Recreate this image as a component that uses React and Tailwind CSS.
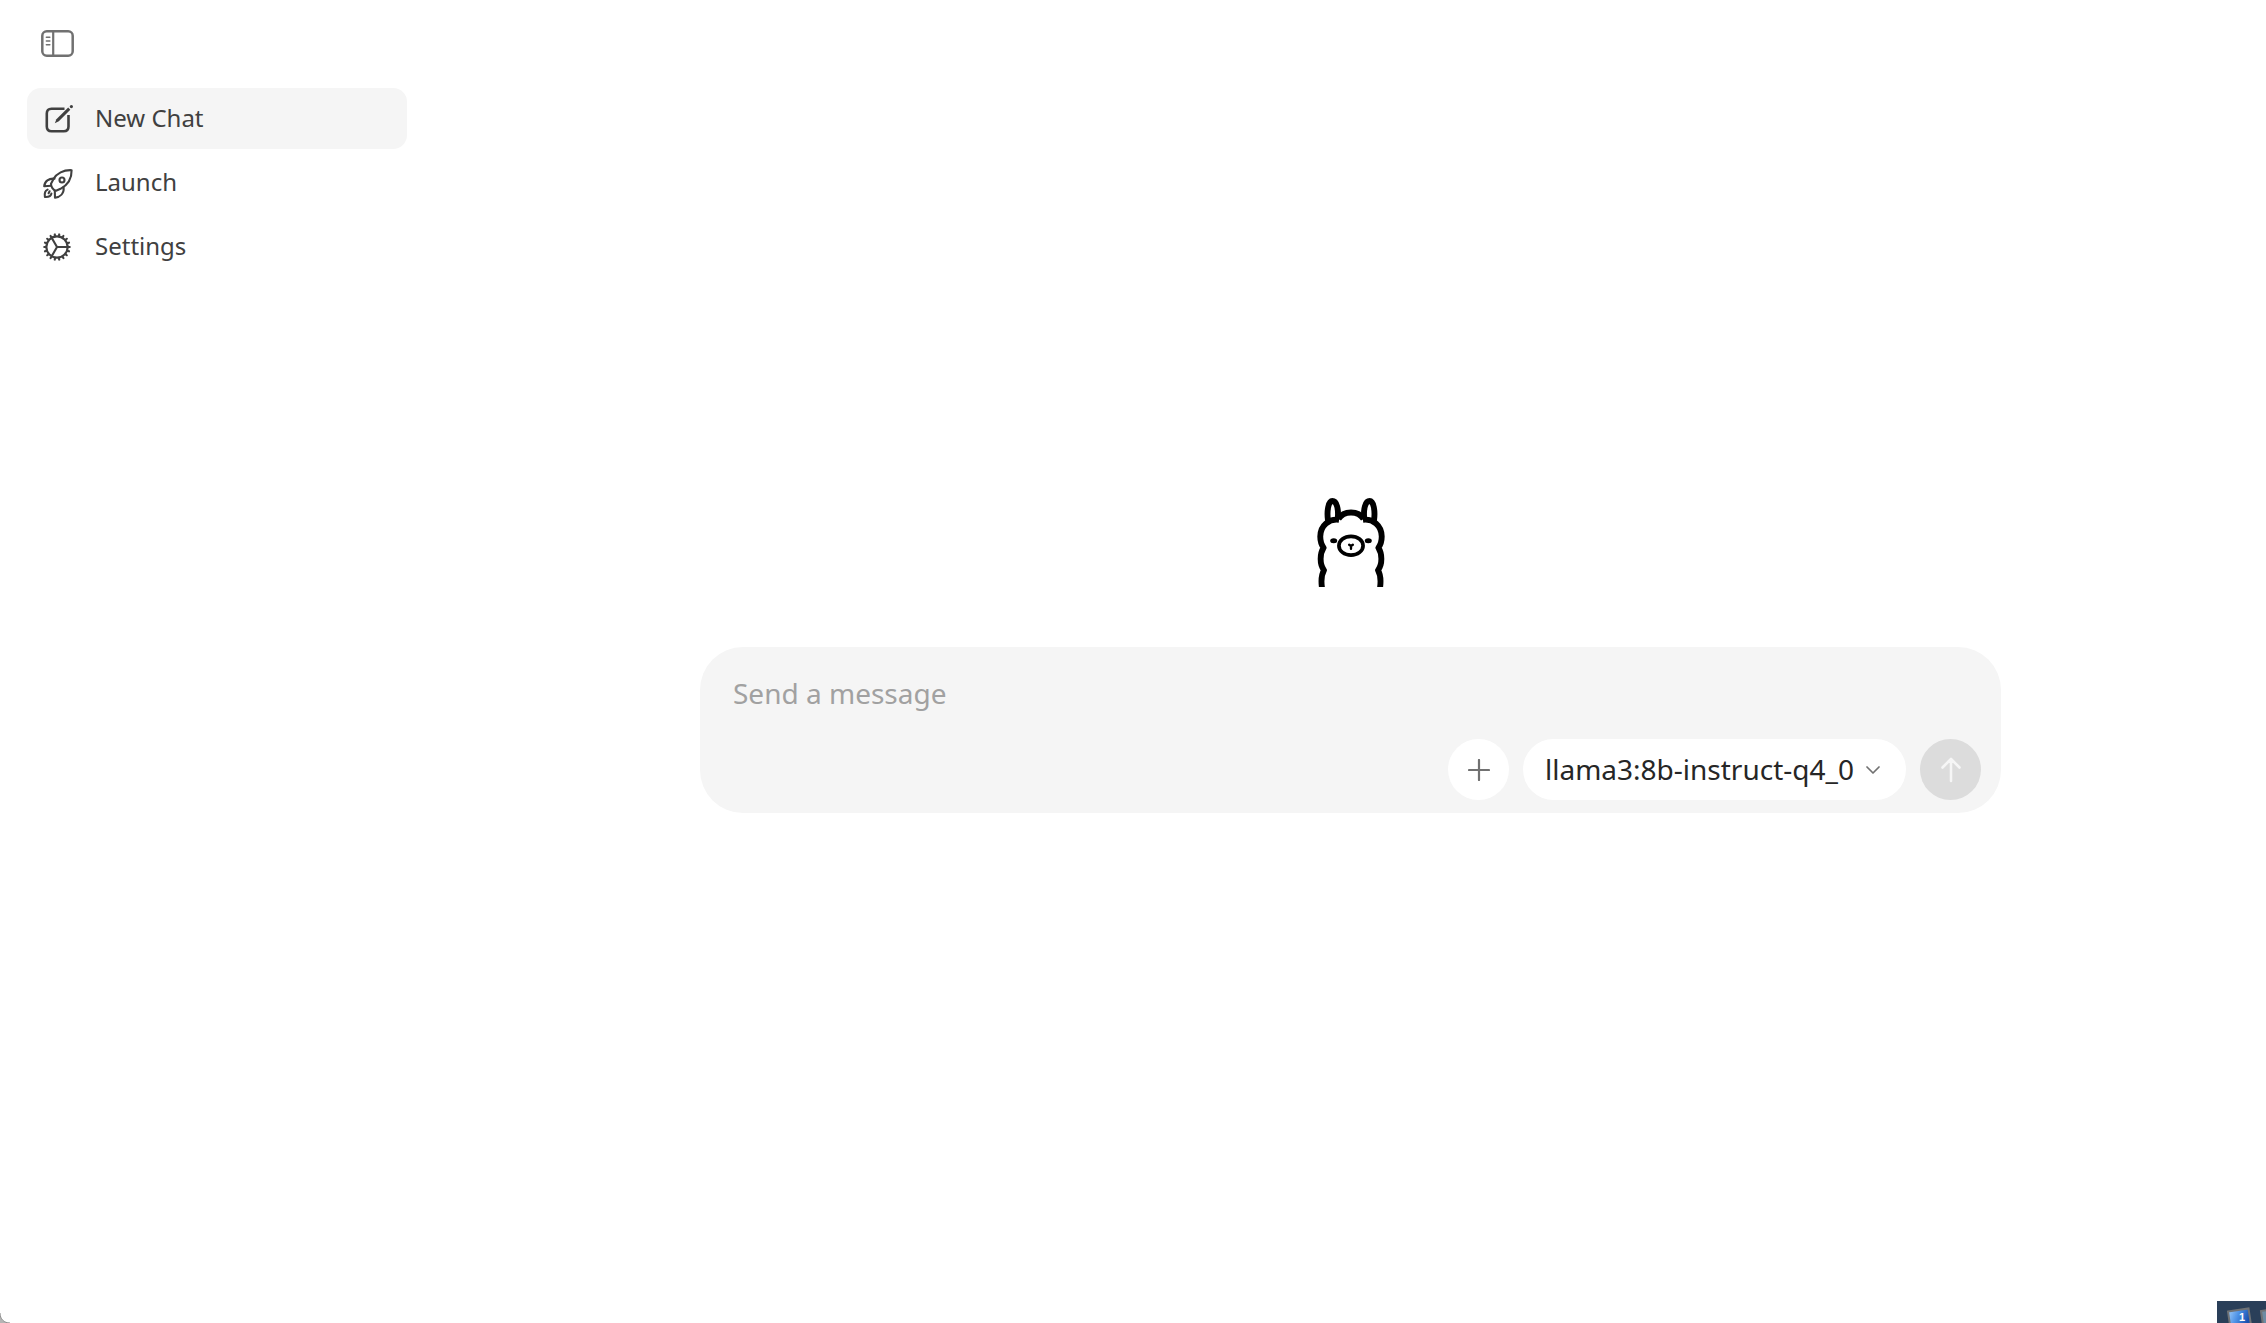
import React, { useState } from "react";
import { HiOutlineCog } from "react-icons/hi2";

function LlamaLogo() {
  return (
    <svg
      viewBox="82 53 201 265"
      className="w-[68px] h-[89px] text-black"
      fill="none"
      stroke="currentColor"
      strokeWidth="17.5"
      strokeLinejoin="round"
      role="img"
      aria-label="Ollama"
    >
      {/* ears */}
      <path d="M114 120C110 92 115 62 127 62C140 62 146 86 143 114" />
      <path d="M251 120C255 92 250 62 238 62C225 62 219 86 222 114" />
      {/* crown */}
      <path d="M145 116C153 102 167 96 182.5 96C198 96 212 102 220 116" />
      {/* left side */}
      <path d="M147 118C118 114 91 134 91 168C91 182 94 192 101 201C90 218 88 250 102 268C95 280 93 298 96 320" />
      {/* right side */}
      <path d="M218 118C247 114 274 134 274 168C274 182 271 192 264 201C275 218 277 250 263 268C270 280 272 298 269 320" />
      <ellipse cx="182.5" cy="195" rx="36" ry="28" strokeWidth="11" />
      <path d="M177 192L182.5 196L188 192M182.5 196V204" strokeWidth="7" strokeLinecap="round" />
      <ellipse cx="131" cy="180" rx="10.5" ry="7.5" fill="currentColor" stroke="none" />
      <ellipse cx="234" cy="180" rx="10.5" ry="7.5" fill="currentColor" stroke="none" />
    </svg>
  );
}

function SidebarIcon() {
  return (
    <svg viewBox="0 0 33 27" className="w-[33px] h-[27px]" fill="none" stroke="currentColor" aria-hidden="true">
      <rect x="1.3" y="1.3" width="30.4" height="24.4" rx="4.5" strokeWidth="2.5" />
      <path d="M12.2 1.5v24" strokeWidth="2.2" />
      <path d="M5.4 7.2h3.4M5.4 11h3.4M5.4 14.7h3.4" strokeWidth="1.6" strokeLinecap="round" />
    </svg>
  );
}

function ComposeIcon() {
  return (
    <svg viewBox="0 0 36 36" className="size-9" fill="none" stroke="currentColor" aria-hidden="true">
      <path
        d="M25.5 7.8H12.5Q7.8 7.8 7.8 12.5V25.5Q7.8 30.2 12.5 30.2H24.8Q29.5 30.2 29.5 25.5V14"
        strokeWidth="2.6"
      />
      <path d="M15.8 22.2l1.6-4L29.2 6.6l2.1 2.1L19.8 20.3z" fill="currentColor" stroke="none" />
      <circle cx="32.4" cy="5.6" r="1.6" fill="currentColor" stroke="none" />
    </svg>
  );
}

function RocketIcon() {
  return (
    <svg
      viewBox="0 0 36 36"
      className="size-9"
      fill="none"
      stroke="currentColor"
      strokeWidth="2.1"
      strokeLinecap="round"
      strokeLinejoin="round"
      aria-hidden="true"
    >
      <path d="M32.6 5.2C24.5 4.8 17.5 8.4 14.5 14L12 18.8C12 21.8 14 25.2 17 25.8L21.5 23.8C29.5 19.5 32.8 13 32.6 5.2z" />
      <circle cx="23" cy="15" r="2.5" />
      <path d="M15.5 13.7C10 13 5.5 16.5 5.2 21.3L12 20.8" />
      <path d="M15.8 26L16 32.8C21 32 25.3 28.5 24.6 22.4" />
      <path d="M8.6 24.6C5.8 25.8 5.4 28.8 5.9 31.9C9.5 32.1 12 31.2 12.4 28.6" />
      <path d="M10.6 26.3L9.6 28.2" />
    </svg>
  );
}

// corner of the desktop showing past the window edge
function DesktopPeek() {
  return (
    <svg viewBox="0 0 49 22" className="fixed right-0 bottom-0 w-[49px] h-[22px]" aria-hidden="true">
      <defs>
        <linearGradient id="screen" x1="0" y1="0" x2="1" y2="0.3">
          <stop offset="0" stopColor="#a5d0fa" />
          <stop offset="0.5" stopColor="#4d92e6" />
          <stop offset="1" stopColor="#1a50ae" />
        </linearGradient>
      </defs>
      <rect width="49" height="22" fill="#2a3f59" />
      <path d="M11 10.5L31.5 7.5L34 24H13z" fill="url(#screen)" stroke="#6f7275" strokeWidth="2" />
      <path d="M51 9L44 10L46 24H51z" fill="#6d8ba3" stroke="#6f7275" strokeWidth="2" />
      <text x="22" y="20" fill="#fff" fontSize="11" fontWeight="700" fontFamily="Liberation Sans, sans-serif">
        1
      </text>
    </svg>
  );
}

const navItems = [
  { label: "New Chat", icon: <ComposeIcon />, active: true },
  { label: "Launch", icon: <RocketIcon /> },
  { label: "Settings", icon: <HiOutlineCog className="size-9 p-px" /> },
];

function Sidebar() {
  return (
    <aside className="w-[435px] shrink-0 pl-[27px] pr-7 pt-[30px]">
      <button type="button" aria-label="Toggle sidebar" className="block ml-[14px] text-[#717171]">
        <SidebarIcon />
      </button>

      <nav className="mt-[31px] flex flex-col gap-[3px]">
        {navItems.map((item) => (
          <a
            key={item.label}
            href="#"
            className={`flex h-[61px] items-center gap-5 rounded-[14px] px-3 text-2xl text-[#404040] ${
              item.active ? "bg-[#f5f5f5]" : ""
            }`}
          >
            {item.icon}
            <span className="pb-[2px]">{item.label}</span>
          </a>
        ))}
      </nav>
    </aside>
  );
}

function Composer() {
  const [message, setMessage] = useState("");

  return (
    <form
      className="w-full max-w-[1301px] rounded-[43px] bg-[#f5f5f5] pt-[26px] pb-[13px] pr-5 pl-[33px]"
      onSubmit={(e) => e.preventDefault()}
    >
      <input
        type="text"
        aria-label="Message"
        placeholder="Send a message"
        value={message}
        onChange={(e) => setMessage(e.target.value)}
        className="block h-10 w-full bg-transparent text-[28px] text-[#262626] outline-none placeholder:text-[#a1a1a1]"
      />

      <div className="mt-[26px] flex items-center justify-end gap-[14px]">
        <button
          type="button"
          aria-label="Add attachment"
          className="flex size-[61px] items-center justify-center rounded-full bg-white text-[#717171]"
        >
          <svg viewBox="0 0 22 22" className="size-[22px]" fill="none" stroke="currentColor" strokeWidth="2.2" strokeLinecap="round">
            <path d="M11 1v20M1 11h20" />
          </svg>
        </button>

        <label className="flex h-[61px] items-center gap-3 rounded-full bg-white pl-[22px] pr-[26px]">
          <select
            aria-label="Model"
            className="appearance-none bg-transparent pb-[2px] text-[28px] text-[#262626] outline-none"
          >
            <option>llama3:8b-instruct-q4_0</option>
          </select>
          <svg viewBox="0 0 14 10" className="h-[10px] w-[14px] text-[#717171]" fill="none" stroke="currentColor" strokeWidth="1.7" strokeLinecap="round" strokeLinejoin="round">
            <path d="M1 2L7 8L13 2" />
          </svg>
        </label>

        <button
          type="submit"
          aria-label="Send"
          className="flex size-[61px] items-center justify-center rounded-full bg-[#dcdcdc] text-[#f6f6f6]"
        >
          <svg viewBox="0 0 22 26" className="h-[26px] w-[22px]" fill="none" stroke="currentColor" strokeWidth="2.6" strokeLinecap="round" strokeLinejoin="round">
            <path d="M11 24V2M2.5 10.5L11 2L19.5 10.5" />
          </svg>
        </button>
      </div>
    </form>
  );
}

export default function App() {
  return (
    <div className="flex min-h-screen bg-white font-['Noto_Sans',sans-serif]">
      <Sidebar />

      <main className="flex flex-1 flex-col items-center justify-center px-8 pb-3">
        <LlamaLogo />
        <div className="mt-[60px] flex w-full justify-center">
          <Composer />
        </div>
      </main>

      {/* rounded window corner */}
      <svg viewBox="0 0 10 10" className="fixed bottom-0 left-0 size-[10px]" aria-hidden="true">
        <path d="M0 0C0 6 4 10 10 10H0z" fill="#b5b5b5" />
        <path d="M0 0C0 6 4 10 10 10" fill="none" stroke="#8f8f8f" />
      </svg>
      <DesktopPeek />
    </div>
  );
}
